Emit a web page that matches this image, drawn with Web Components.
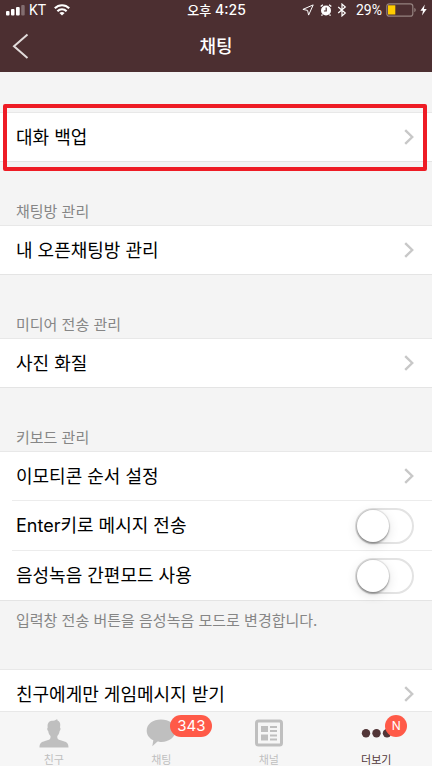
<!DOCTYPE html>
<html lang="ko">
<head>
<meta charset="utf-8">
<meta name="viewport" content="width=device-width, initial-scale=1">
<title>채팅</title>
<style>
  html, body { margin: 0; height: 100%; }
  body {
    font-family: Inter, "Noto Sans CJK KR", sans-serif;
    background: #f4f4f4;
    color: #000;
    overflow: hidden;
  }
</style>
</head>
<body>
<settings-screen>
  <phone-status slot="top" carrier="KT" time="4:25" battery="29%">오후</phone-status>
  <nav-header slot="top">채팅</nav-header>

  <settings-section>
    <settings-row highlighted>대화 백업</settings-row>
  </settings-section>
  <settings-section heading="채팅방 관리">
    <settings-row>내 오픈채팅방 관리</settings-row>
  </settings-section>
  <settings-section heading="미디어 전송 관리">
    <settings-row>사진 화질</settings-row>
  </settings-section>
  <settings-section heading="키보드 관리" note="입력창 전송 버튼을 음성녹음 모드로 변경합니다.">
    <settings-row>이모티콘 순서 설정</settings-row>
    <switch-row>Enter키로 메시지 전송</switch-row>
    <switch-row>음성녹음 간편모드 사용</switch-row>
  </settings-section>
  <settings-section>
    <settings-row>친구에게만 게임메시지 받기</settings-row>
  </settings-section>

  <tab-bar slot="bottom">
    <tab-item icon="friends">친구</tab-item>
    <tab-item icon="chats" badge="343">채팅</tab-item>
    <tab-item icon="channel">채널</tab-item>
    <tab-item icon="more" badge="N" current>더보기</tab-item>
  </tab-bar>
</settings-screen>

<script>
class BaseElement extends HTMLElement {
  constructor() {
    super();
    this.attachShadow({ mode: 'open' });
  }
  connectedCallback() {
    this.shadowRoot.innerHTML =
      `<style>*, *::before { box-sizing: border-box; } svg { display: block; flex: none; } ${this.styles()}</style>${this.markup()}`;
  }
  attr(name) { return this.getAttribute(name) || ''; }
}

customElements.define('settings-screen', class extends BaseElement {
  styles() { return `
    :host { display: flex; flex-direction: column; height: 100vh; }
    header { flex: none; background: #4c2f31; color: #fff; }
    main { flex: 1; min-height: 0; overflow: hidden; }
  `; }
  markup() { return `<header><slot name="top"></slot></header><main><slot></slot></main><slot name="bottom"></slot>`; }
});

customElements.define('phone-status', class extends BaseElement {
  styles() { return `
    :host { display: grid; grid-template-columns: 1fr auto 1fr; align-items: center; height: 20px; padding: 0 5px 0 6px; font-size: 14px; line-height: 20px; }
    div { display: flex; align-items: center; }
    .left { gap: 4px; font-family: Roboto, sans-serif; }
    .left svg + span { margin-right: 4px; }
    .time { gap: 4px; font-weight: 500; }
    .time span:first-child { font-size: 13px; }
    .right { justify-content: flex-end; gap: 4px; }
    .battery { font-family: Roboto, sans-serif; }
    .place { margin-right: 2px; }
    .bt { margin-right: 4px; }
  `; }
  markup() { return `
    <div class="left">
      <svg width="19" height="12" viewBox="0 0 19 12" fill="#fff"><rect x="0" y="7" width="3.5" height="4.5" rx="1"/><rect x="5" y="5" width="3.5" height="6.500" rx="1"/><rect x="10" y="3" width="3.700" height="8.500" rx="1"/><rect x="15.200" y="1" width="3.500" height="10.500" rx="1" opacity=".3"/></svg>
      <span>${this.attr('carrier')}</span>
      <svg width="16" height="12" viewBox="0 0 16 12" fill="none" stroke="#fff" stroke-width="2.100"><path d="M.8 4.300C4.800.2 11.200.2 15.200 4.300M3.400 7.200C6 4.600 10 4.600 12.600 7.200"/><path d="M8 11.500 5.400 8.900Q8 6.900 10.600 8.900Z" fill="#fff" stroke="none"/></svg>
    </div>
    <div class="time"><span><slot></slot></span><span>${this.attr('time')}</span></div>
    <div class="right">
      <svg class="place" width="12" height="12" viewBox="0 0 12 12" fill="none" stroke="#fff" stroke-width="1"><path d="M11.200.9.9 5.400 5.600 6.400 6.600 11.100Z"/></svg>
      <svg width="12" height="12" viewBox="0 0 12 12"><circle cx="6" cy="6.500" r="5" fill="#fff"/><path d="M.7 2.600 2.900.8M11.300 2.600 9.100.8M2.500 10.500 1.500 11.600M9.500 10.500 10.500 11.600" stroke="#fff" stroke-width="1.300"/><path d="M6.200 3.500V7H3.900" fill="none" stroke="#4c2f31" stroke-width="1.200"/></svg>
      <svg class="bt" width="12" height="14" viewBox="0 0 12 14" fill="none" stroke="#fff" stroke-width="1.200"><path d="M2.200 4 9.300 10 6 12.900V1.100L9.300 4 2.200 10"/></svg>
      <span class="battery">${this.attr('battery')}</span>
      <svg width="30" height="14" viewBox="0 0 30 14"><rect x=".8" y=".8" width="26" height="12.400" rx="2.500" fill="none" stroke="#94827f" stroke-width="1.200"/><rect x="2" y="2.300" width="7.300" height="9.200" fill="#fc0"/><path d="M28.300 4.800Q29.800 5.500 29.800 7T28.300 9.200Z" fill="#94827f"/></svg>
      <svg width="7" height="12" viewBox="0 0 7 12" fill="#fff"><path d="M4.800.5.4 6.700H3L2 11.500 6.700 5.100H3.900Z"/></svg>
    </div>`; }
});

customElements.define('nav-header', class extends BaseElement {
  styles() { return `
    :host { display: grid; grid-template-columns: 44px 1fr 44px; align-items: center; height: 52px; }
    button { display: flex; align-items: center; height: 52px; border: 0; background: none; padding: 0 12px; }
    h1 { margin: 0; text-align: center; font-size: 18px; font-weight: 500; line-height: 28px; padding-top: 2px; }
  `; }
  markup() { return `
    <button type="button" aria-label="뒤로"><svg width="17" height="26" viewBox="0 0 17 26" fill="none" stroke="#e2dcdb" stroke-width="2"><path d="M15.500 1.500 2 13.300 15.500 25"/></svg></button>
    <h1><slot></slot></h1>`; }
});

customElements.define('settings-section', class extends BaseElement {
  styles() { return `
    :host { display: block; }
    h2, p { margin: 0; padding: 0 16px; font-size: 15px; font-weight: 400; color: #868686; }
    h2 { height: 63px; padding-top: 39px; line-height: 22px; }
    p { height: 28px; padding-top: 11px; line-height: 18px; }
    .space { height: 40px; }
    .group { background: #fff; border-top: 1px solid #e8e8e8; }
  `; }
  markup() {
    const heading = this.attr('heading'), note = this.attr('note');
    return `${heading ? `<h2>${heading}</h2>` : '<div class="space"></div>'}
      <div class="group"><slot></slot></div>
      ${note ? `<p>${note}</p>` : ''}`;
  }
});

const ROW_STYLES = `
  :host { display: block; position: relative; }
  .row {
    display: flex; align-items: center; justify-content: space-between;
    width: 100%; padding: 0 18px 0 16px; border: 0; background: none;
    font: inherit; font-size: 18px; line-height: 28px; color: #000; text-align: left;
  }
  .row span { padding-top: 1px; }
  :host::after { content: ""; display: block; height: 1px; margin-left: 12px; background: #ececec; }
  :host(:last-child)::after { margin-left: 0; background: #e4e4e4; }
`;

customElements.define('settings-row', class extends BaseElement {
  styles() { return `${ROW_STYLES}
    .row { height: 48px; }
    .mark { position: absolute; inset: -9px 5px -9px 3px; border: 4px solid #ee1c25; border-radius: 2px; pointer-events: none; z-index: 1; }
  `; }
  markup() { return `
    <button class="row" type="button"><span><slot></slot></span>
      <svg width="10" height="16" viewBox="0 0 10 16" fill="none" stroke="#c8c8c8" stroke-width="2.400"><path d="M1.200 1.200 8.200 8 1.200 14.800"/></svg>
    </button>${this.hasAttribute('highlighted') ? '<div class="mark"></div>' : ''}`; }
});

customElements.define('switch-row', class extends BaseElement {
  styles() { return `${ROW_STYLES}
    .row { height: 49px; }
    input {
      appearance: none; flex: none; display: flex; width: 59px; height: 36px; margin: 0;
      border: 2px solid #e3e3e3; border-radius: 18px; background: #fff;
    }
    input::before {
      content: ""; width: 32px; height: 32px; border-radius: 50%; background: #fff;
      box-shadow: 0 2px 2px rgba(0,0,0,.28), 0 0 1px 1px rgba(0,0,0,.1), 0 3px 12px rgba(0,0,0,.12);
    }
    input:checked { background: #4cd964; border-color: #4cd964; justify-content: flex-end; }
  `; }
  markup() { return `<label class="row"><span><slot></slot></span><input type="checkbox" role="switch"></label>`; }
});

customElements.define('tab-bar', class extends BaseElement {
  styles() { return `
    :host { display: block; flex: none; position: relative; z-index: 2; }
    nav { display: grid; grid-template-columns: repeat(4, 1fr); height: 55px; padding-right: 2px; background: #f6f6f6; border-top: 1px solid #e8e8e8; }
  `; }
  markup() { return `<nav><slot></slot></nav>`; }
});

const TAB_ICONS = {
  friends: '<path d="M.5 28.500C.5 24 2.500 23 6 22 9.500 21 11.500 20.500 11.500 18.500V17C9.800 15.500 9.500 13.500 9.200 12 8 11.500 8 9 8.700 8.500 8 3.500 10.500 1.800 14 1.800 16.500 1.800 17 .5 18.300 0 18 1 18.500 1.400 19 1.700 21.500 3 21.500 5.500 21 8.500 21.900 9 21.600 11.500 20.600 12 20.300 13.500 20 15.500 18.300 17V18.500C18.300 20.500 20.500 21 24 22 27.500 23 29.500 24 29.500 28.500Z"/>',
  chats: '<path d="M15 .5C23 .5 29.500 5 29.500 11.500S23 23 15.500 23C13.500 23 12.500 22.900 11.500 22.600L6.300 27.300 7.300 21.200C3 19.200.7 15.500.7 11.700.7 5 7 .5 15 .5Z"/>',
  channel: '<rect x="2.500" y="2" width="25" height="24" rx="2" fill="none" stroke="currentColor" stroke-width="3"/><path d="M7 7h7v6H7zM7 15.500h7v6H7zM16 7h7v2h-7zM16 11h7v2h-7zM16 15.500h7v2h-7zM16 19.500h7v2h-7z"/>',
  more: '<circle cx="5" cy="14.300" r="4.200"/><circle cx="15.500" cy="14.300" r="4.200"/><circle cx="26" cy="14.300" r="4.200"/>'
};

customElements.define('tab-item', class extends BaseElement {
  styles() { return `
    :host { display: block; color: #bfbfbf; }
    :host([current]) { color: #523638; }
    button { display: flex; flex-direction: column; align-items: center; width: 100%; height: 54px; padding: 7px 0 0; border: 0; background: none; font: inherit; color: inherit; }
    .icon { position: relative; }
    .label { margin-top: 5px; font-size: 11px; line-height: 14px; }
    .badge {
      position: absolute; top: -4px; left: 24px; min-width: 22px; height: 22px; padding: 0 7px;
      border-radius: 11px; background: #ff5a48; color: #fff; font-size: 15px; line-height: 22px; text-align: center;
    }
    :host([current]) .badge { padding: 0 6px; font-size: 12px; }
  `; }
  markup() {
    const badge = this.attr('badge');
    return `<button type="button"${this.hasAttribute('current') ? ' aria-current="page"' : ''}>
      <span class="icon"><svg width="30" height="29" viewBox="0 0 30 29" fill="currentColor">${TAB_ICONS[this.attr('icon')]}</svg>${badge ? `<span class="badge">${badge}</span>` : ''}</span>
      <span class="label"><slot></slot></span></button>`;
  }
});
</script>
</body>
</html>
